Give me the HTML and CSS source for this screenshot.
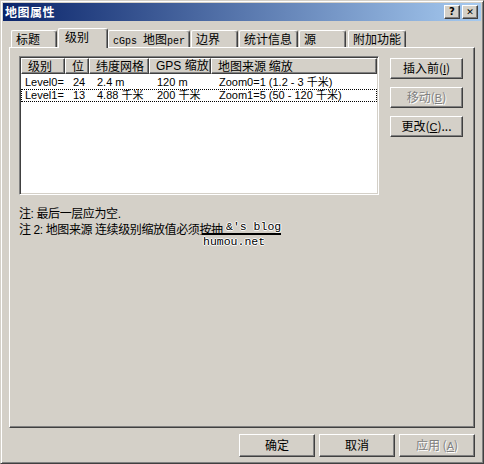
FILE: index.html
```html
<!DOCTYPE html>
<html>
<head>
<meta charset="utf-8">
<link rel="stylesheet" href="styles.css">
</head>
<body>
<div class="window">
  <div class="titlebar">
    <span class="title">地图属性</span>
    <div class="tb-btns">
      <span class="tbb">?</span>
      <span class="tbb tbb-x">✕</span>
    </div>
  </div>
  <div class="tabs">
    <div class="tab t1">标题</div>
    <div class="tab t2 active">级别</div>
    <div class="tab t3"><span class="mono">cGps </span>地图<span class="mono">per</span></div>
    <div class="tab t4">边界</div>
    <div class="tab t5">统计信息</div>
    <div class="tab t6">源</div>
    <div class="tab t7">附加功能</div>
  </div>
  <div class="panel">
    <div class="panel-top">
      <div class="listbox">
        <div class="lrow header">
          <div class="c c1">级别</div>
          <div class="c c2">位</div>
          <div class="c c3">纬度网格</div>
          <div class="c c4">GPS 缩放</div>
          <div class="c c5">地图来源 缩放</div>
        </div>
        <div class="rows">
          <div class="lrow">
            <div class="c c1">Level0=</div>
            <div class="c c2">24</div>
            <div class="c c3">2.4 m</div>
            <div class="c c4">120 m</div>
            <div class="c c5">Zoom0=1 (1.2 - 3 千米)</div>
          </div>
          <div class="lrow focus">
            <div class="c c1">Level1=</div>
            <div class="c c2">13</div>
            <div class="c c3">4.88 千米</div>
            <div class="c c4">200 千米</div>
            <div class="c c5">Zoom1=5 (50 - 120 千米)</div>
          </div>
        </div>
      </div>
      <div class="side-btns">
        <div class="btn">插入前(<u>I</u>)</div>
        <div class="btn disabled">移动(<u>B</u>)</div>
        <div class="btn">更改(<u>C</u>)...</div>
      </div>
    </div>
    <div class="notes">
      <div class="note">注: 最后一层应为空.</div>
      <div class="note">注 2: 地图来源 连续级别缩放值必须按抽</div>
      <div class="wm">
        <span class="wm1">&amp;'s blog</span>
        <span class="wm2">humou.net</span>
      </div>
    </div>
  </div>
  <div class="footer">
    <div class="btn fbtn">确定</div>
    <div class="btn fbtn">取消</div>
    <div class="btn fbtn disabled">应用 (<u>A</u>)</div>
  </div>
</div>
</body>
</html>
```
FILE: styles.css
```css
html, body {
  margin: 0;
  padding: 0;
  background: #D4D0C8;
}
body {
  font-family: "Liberation Sans", "Noto Sans CJK SC", sans-serif;
  font-size: 12px;
  color: #000;
}
.window {
  box-sizing: border-box;
  width: 484px;
  height: 464px;
  background: #D4D0C8;
  border: 1px solid;
  border-color: #D4D0C8 #404040 #404040 #D4D0C8;
  box-shadow: inset 1px 1px #fff, inset -1px -1px #808080;
  padding: 2px;
  display: flex;
  flex-direction: column;
}
.titlebar {
  height: 18px;
  flex: none;
  background: linear-gradient(to right, #0A246A, #A6CAF0);
  display: flex;
  align-items: center;
  justify-content: space-between;
  padding: 0 3px 0 2px;
}
.title {
  color: #fff;
  font-family: "Noto Sans CJK SC", sans-serif;
  font-weight: bold;
  font-size: 12px;
  letter-spacing: 0.5px;
  line-height: 16px;
}
.tb-btns {
  display: flex;
  gap: 2px;
}
.tbb {
  box-sizing: border-box;
  width: 16px;
  height: 14px;
  background: #D4D0C8;
  border: 1px solid;
  border-color: #fff #404040 #404040 #fff;
  box-shadow: inset -1px -1px #808080;
  font-family: "DejaVu Sans", sans-serif;
  font-weight: bold;
  font-size: 10px;
  line-height: 12px;
  text-align: center;
  color: #000;
}
.tbb-x {
  font-size: 9px;
}
.tabs {
  flex: none;
  margin-top: 7px;
  height: 19px;
  padding-left: 6px;
  display: flex;
  align-items: flex-end;
  position: relative;
  z-index: 2;
}
.tab {
  box-sizing: border-box;
  height: 17px;
  background: #D4D0C8;
  border-top: 1px solid #fff;
  border-left: 1px solid #fff;
  border-right: 1px solid #404040;
  box-shadow: inset -1px 0 #808080;
  border-radius: 2px 3px 0 0;
  padding-left: 4px;
  font-family: "Noto Sans CJK SC", sans-serif;
  font-size: 12px;
  line-height: 15px;
  white-space: nowrap;
  overflow: hidden;
}
.tab.active {
  height: 20px;
  margin-bottom: -1px;
  padding-left: 6px;
  line-height: 15px;
}
.mono {
  font-family: "Liberation Mono", monospace;
  font-size: 10px;
}
.t1 { margin-left: 2px; width: 46px; }
.t2 { margin-left: 1px; width: 50px; }
.t3 { margin-left: 0; width: 82px; }
.t4 { margin-left: 1px; width: 47px; }
.t5 { margin-left: 1px; width: 59px; }
.t6 { margin-left: 1px; width: 47px; }
.t7 { margin-left: 2px; width: 58px; }
.panel {
  box-sizing: border-box;
  flex: none;
  margin-left: 6px;
  width: 466px;
  height: 381px;
  border: 1px solid;
  border-color: #fff #404040 #404040 #fff;
  box-shadow: inset -1px -1px #808080;
  padding: 8px 0 0 9px;
}
.panel-top {
  display: flex;
  gap: 11px;
}
.listbox {
  box-sizing: border-box;
  width: 360px;
  height: 139px;
  background: #fff;
  border: 1px solid;
  border-color: #808080 #fff #fff #808080;
  box-shadow: inset 1px 1px #404040, inset -1px -1px #D4D0C8;
  padding: 1px;
}
.lrow {
  display: flex;
  height: 13px;
  font-size: 11px;
  line-height: 13px;
  white-space: nowrap;
}
.lrow .c {
  box-sizing: border-box;
  padding-left: 8px;
  overflow: hidden;
}
.lrow .c1 { padding-left: 4px; }
.c1 { width: 44px; }
.c2 { width: 24px; }
.c3 { width: 60px; }
.c4 { width: 62px; }
.c5 { width: 166px; }
.lrow.header {
  height: 16px;
  background: #D4D0C8;
}
.lrow.header .c {
  height: 16px;
  border: 1px solid;
  border-color: #fff #404040 #404040 #fff;
  box-shadow: inset -1px -1px #808080;
  padding-left: 6px;
  font-family: "Noto Sans CJK SC", sans-serif;
  font-size: 12px;
  line-height: 14px;
}
.lrow.header .c4 {
  font-family: "Liberation Sans", "Noto Sans CJK SC", sans-serif;
}
.rows {
  padding-top: 2px;
}
.lrow.focus {
  outline: 1px dotted #000;
  outline-offset: -1px;
}
.side-btns {
  margin-top: 2px;
  display: flex;
  flex-direction: column;
  gap: 8px;
}
.btn {
  box-sizing: border-box;
  width: 73px;
  height: 21px;
  background: #D4D0C8;
  border: 1px solid;
  border-color: #fff #404040 #404040 #fff;
  box-shadow: inset -1px -1px #808080;
  font-family: "Noto Sans CJK SC", sans-serif;
  font-size: 12px;
  line-height: 18px;
  text-align: center;
  white-space: nowrap;
}
.btn u {
  font-family: "Liberation Sans", sans-serif;
  font-size: 11px;
}
.btn.disabled {
  color: #808080;
  text-shadow: 1px 1px #fff;
}
.notes {
  position: relative;
  margin-top: 11px;
}
.note {
  font-family: "Liberation Sans", "Noto Sans CJK SC", sans-serif;
  font-size: 12px;
  line-height: 16px;
  height: 16px;
  letter-spacing: -0.4px;
}
.wm {
  position: absolute;
  left: 183px;
  top: 15px;
  display: flex;
  flex-direction: column;
  align-items: flex-start;
  font-family: "Liberation Mono", monospace;
  color: #000;
  white-space: nowrap;
  text-shadow: 1px 0 #fff, -1px 0 #fff, 0 1px #fff, 0 -1px #fff;
}
.wm1 {
  padding-left: 24px;
  font-size: 11.5px;
  line-height: 12px;
  border-bottom: 2px solid #000;
}
.wm2 {
  font-size: 11.5px;
  line-height: 14px;
  padding-left: 1px;
}
.footer {
  flex: none;
  margin-top: 6px;
  display: flex;
  justify-content: flex-end;
  gap: 4px;
  padding-right: 6px;
}
.fbtn {
  width: 76px;
  height: 23px;
  line-height: 20px;
}
```
